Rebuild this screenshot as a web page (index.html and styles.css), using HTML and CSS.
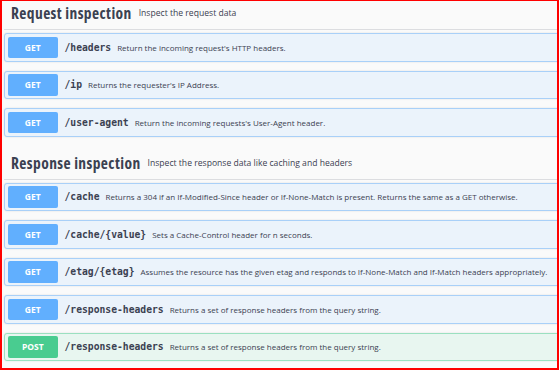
FILE: index.html
```html
<!DOCTYPE html>
<html lang="en">
<head>
    <meta charset="UTF-8">
    <title>httpbin - Request / Response inspection</title>
    <link rel="stylesheet" href="styles.css">
</head>
<body>
    <div class="frame">
        <section class="tag-section">
            <h4 class="tag">
                <span class="tag-name">Request inspection</span>
                <small class="tag-desc">Inspect the request data</small>
            </h4>
            <div class="opblock get">
                <span class="method">GET</span>
                <span class="path">/headers</span>
                <span class="desc">Return the incoming request's HTTP headers.</span>
            </div>
            <div class="opblock get">
                <span class="method">GET</span>
                <span class="path">/ip</span>
                <span class="desc">Returns the requester's IP Address.</span>
            </div>
            <div class="opblock get">
                <span class="method">GET</span>
                <span class="path">/user-agent</span>
                <span class="desc">Return the incoming requests's User-Agent header.</span>
            </div>
        </section>

        <section class="tag-section">
            <h4 class="tag">
                <span class="tag-name">Response inspection</span>
                <small class="tag-desc">Inspect the response data like caching and headers</small>
            </h4>
            <div class="opblock get">
                <span class="method">GET</span>
                <span class="path">/cache</span>
                <span class="desc">Returns a 304 if an If-Modified-Since header or If-None-Match is present. Returns the same as a GET otherwise.</span>
            </div>
            <div class="opblock get">
                <span class="method">GET</span>
                <span class="path">/cache/{value}</span>
                <span class="desc">Sets a Cache-Control header for n seconds.</span>
            </div>
            <div class="opblock get">
                <span class="method">GET</span>
                <span class="path">/etag/{etag}</span>
                <span class="desc">Assumes the resource has the given etag and responds to If-None-Match and If-Match headers appropriately.</span>
            </div>
            <div class="opblock get">
                <span class="method">GET</span>
                <span class="path">/response-headers</span>
                <span class="desc">Returns a set of response headers from the query string.</span>
            </div>
            <div class="opblock post">
                <span class="method">POST</span>
                <span class="path">/response-headers</span>
                <span class="desc">Returns a set of response headers from the query string.</span>
            </div>
        </section>
    </div>
</body>
</html>
```

FILE: styles.css
```css
body {
    margin: 0;
    padding: 0;
    background: #fff;
    font-family: 'Open Sans', sans-serif;
    color: #3b4151;
}

.frame {
    width: 559px;
    height: 370px;
    box-sizing: border-box;
    border: 2px solid #ff0000;
    border-top-width: 1px;
    background: #fafafa;
    overflow: hidden;
    padding-left: 2px;
}

.tag-section + .tag-section {
    margin-top: 14.5px;
}

.tag {
    display: flex;
    align-items: center;
    height: 29px;
    box-sizing: border-box;
    margin: 0 -4px 3px 0;
    padding: 0 0 5px 7px;
    border-bottom: 1px solid #dcdde0;
}

.tag-section + .tag-section .tag {
    margin-bottom: 2.5px;
}

.tag-name {
    font-family: 'Open Sans', sans-serif;
    font-weight: 700;
    font-size: 15.5px;
    font-stretch: 87.5%;
    letter-spacing: 0.4px;
    color: #3b4151;
}

.tag-desc {
    margin-left: 7px;
    font-size: 8.6px;
    font-weight: 400;
    color: #3b4151;
}

.opblock {
    display: flex;
    align-items: center;
    height: 28.5px;
    box-sizing: border-box;
    margin: 0 -4px 9px 0;
    padding: 0 3px;
    border: 1px solid;
    border-radius: 3px;
    box-shadow: 0 0 2px rgba(0, 0, 0, 0.12);
}

.opblock.get {
    background: #ebf3fb;
    border-color: #a9d0f8;
}

.opblock.post {
    background: #e8f6f0;
    border-color: #9be0c0;
}

.method {
    width: 49.5px;
    height: 21.5px;
    line-height: 21.5px;
    text-align: center;
    border-radius: 2px;
    color: #fff;
    font-size: 8.5px;
    font-weight: 700;
    flex-shrink: 0;
}

.get .method {
    background: #61affe;
}

.post .method {
    background: #49cc90;
}

.path {
    margin-left: 7px;
    font-family: 'DejaVu Sans Mono', monospace;
    font-weight: 700;
    font-size: 9.7px;
    color: #3b4151;
    white-space: nowrap;
}

.desc {
    margin-left: 6px;
    font-size: 8px;
    color: #3b4151;
    white-space: nowrap;
}
```
